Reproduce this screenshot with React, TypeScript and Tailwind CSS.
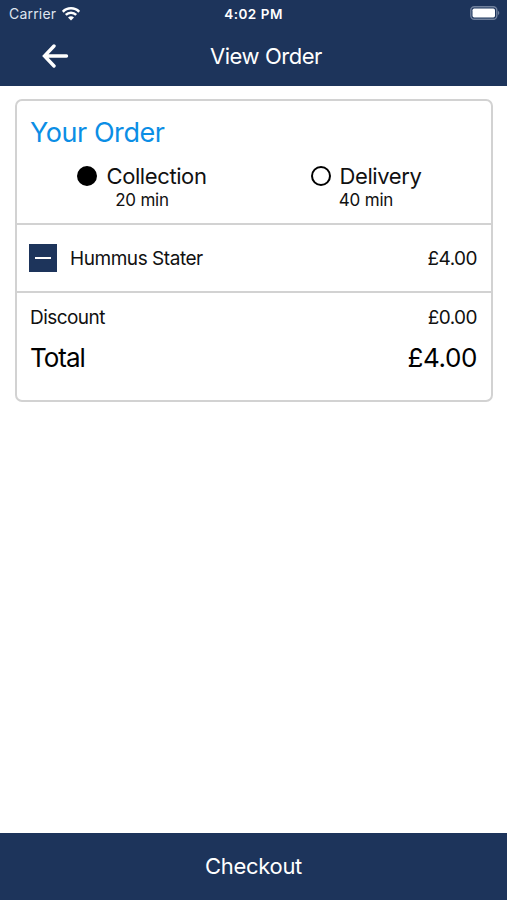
import React from "react";

interface OptionProps {
  label: string;
  time: string;
  selected?: boolean;
}

const order = {
  items: [{ name: "Hummus Stater", price: "£4.00" }],
  discount: "£0.00",
  total: "£4.00",
};

export default function App() {
  return (
    <div className="flex h-screen flex-col bg-white font-['Inter',sans-serif] text-[#111]">
      <header className="h-[86px] bg-[#1d345b] text-white">
        <StatusBar />
        <div className="flex h-[56px] items-center">
          <button className="ml-[42px] w-[168px]" aria-label="Back">
            <BackArrow />
          </button>
          <h1 className="text-[22px] leading-7 tracking-[-0.45px]">
            View Order
          </h1>
        </div>
      </header>

      <main className="flex-1 pr-[14px] pl-[15px] pt-[13px]">
        <section className="h-[303px] rounded-[7px] border-2 border-[#d2d2d2]">
          <div className="h-[124px] border-b-2 border-[#d2d2d2] px-[13px] pt-[14px]">
            <h2 className="text-[27px] leading-9 tracking-[-0.45px] text-[#0b8ee5]">
              Your Order
            </h2>
            <div className="mt-[11px] grid grid-cols-2">
              <DeliveryOption label="Collection" time="20 min" selected />
              <DeliveryOption label="Delivery" time="40 min" />
            </div>
          </div>

          {order.items.map((item) => (
            <div
              key={item.name}
              className="flex h-[68px] items-center border-b-2 border-[#d2d2d2] pr-[14px] pl-[12px] text-[19px]"
            >
              <button
                className="flex size-[28px] items-center justify-center bg-[#1d345b]"
                aria-label="Remove item"
              >
                <span className="h-[2px] w-[16px] bg-white" />
              </button>
              <span className="ml-[13px] flex-1 pt-[2px] tracking-[-0.45px]">
                {item.name}
              </span>
              <span className="pt-[2px] tracking-[-0.55px]">{item.price}</span>
            </div>
          ))}

          <div className="pr-[14px] pl-[13px] pt-[11px]">
            <div className="flex justify-between text-[19px] leading-7 tracking-[-0.55px]">
              <span>Discount</span>
              <span>{order.discount}</span>
            </div>
            <div className="mt-[8px] flex justify-between text-[26px] leading-9 text-black">
              <span className="tracking-[-1px]">Total</span>
              <span className="tracking-[-0.4px]">{order.total}</span>
            </div>
          </div>
        </section>
      </main>

      <button className="h-[67px] bg-[#1d345b] text-[22px] tracking-[-0.3px] text-white">
        Checkout
      </button>
    </div>
  );
}

const DeliveryOption = ({ label, time, selected }: OptionProps) => (
  <div className="flex flex-col items-center">
    <div className="flex items-center gap-[9px]">
      <span
        className={`size-[20px] rounded-full border-2 border-black ${
          selected ? "bg-black" : ""
        }`}
      />
      <span className="text-[22px] leading-7 tracking-[-0.4px]">{label}</span>
    </div>
    <span className="text-[17px] leading-5 tracking-[-0.2px]">{time}</span>
  </div>
);

const StatusBar = () => (
  <div className="grid h-[28px] grid-cols-3 items-center text-[14px]">
    <div className="flex items-center gap-[6px] pb-px pl-[9px] text-[#dfe5ef]">
      <span className="tracking-[0.2px]">Carrier</span>
      <WifiIcon />
    </div>
    <span className="text-center text-[13.5px] font-semibold tracking-[0.5px]">
      4:02 PM
    </span>
    <div className="flex justify-end pr-[7px] pb-[2px]">
      <BatteryIcon />
    </div>
  </div>
);

const BackArrow = () => (
  <svg width="27" height="24" viewBox="0 0 27 24" fill="none">
    <path
      d="M24.5 12H3M12 2L2.5 12L12 22"
      stroke="white"
      strokeWidth="3.4"
      strokeLinecap="round"
    />
  </svg>
);

const WifiIcon = () => (
  <svg width="18" height="14" viewBox="0 0 18 14" fill="none">
    <path
      d="M0.8 4.8C5.2 0.2 12.8 0.2 17.2 4.8M3.8 7.9C6.7 5 11.3 5 14.2 7.9"
      stroke="white"
      strokeWidth="2.5"
    />
    <path d="M6 10.5Q9 8 12 10.5L9 13.6Z" fill="white" />
  </svg>
);

const BatteryIcon = () => (
  <svg width="30" height="14" viewBox="0 0 30 14" fill="none">
    <rect x="0.8" y="0.8" width="26" height="12.4" rx="3.5" stroke="#71819d" strokeWidth="1.4" />
    <rect x="2.5" y="2.5" width="22.5" height="9" rx="1.7" fill="white" />
    <path d="M28 4.8Q30.6 7 28 9.2Z" fill="#71819d" />
  </svg>
);
